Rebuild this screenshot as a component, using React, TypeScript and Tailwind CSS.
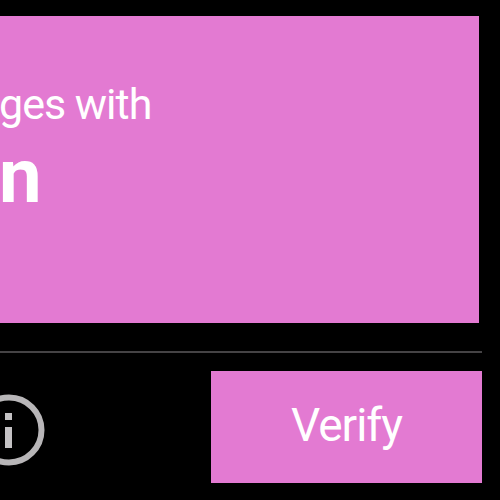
function InfoIcon() {
  return (
    <svg className="-ml-[27px] mt-[6px] h-[72px] w-[72px] shrink-0" viewBox="0 0 72 72" fill="none">
      <circle cx="36" cy="36" r="32.5" stroke="#b8b6b8" strokeWidth="6" />
      <rect x="32" y="19" width="7" height="7" fill="#c4c2c4" />
      <rect x="32" y="33" width="7" height="21" fill="#c4c2c4" />
    </svg>
  );
}

export default function App() {
  return (
    <div className="h-[500px] w-[500px] overflow-hidden bg-black pt-4 pr-[18px] font-['Roboto',sans-serif] text-white">
      <div className="mr-[3px] flex h-[307px] flex-col bg-[#e37ad2] pt-[61px]">
        <p className="-ml-[1px] text-[43px] leading-[54px] tracking-[-1px] whitespace-nowrap">ges with</p>
        <p className="-ml-[1px] mt-[1px] text-[76px] leading-[88px] font-bold whitespace-nowrap">n</p>
      </div>
      <div className="mt-[28px] h-[2px] bg-[#454345]" />
      <div className="mt-[18px] flex items-center justify-between">
        <InfoIcon />
        <button className="h-[112px] w-[271px] bg-[#e37ad2] pb-[3px] text-[46px] tracking-[-1px]">Verify</button>
      </div>
    </div>
  );
}
